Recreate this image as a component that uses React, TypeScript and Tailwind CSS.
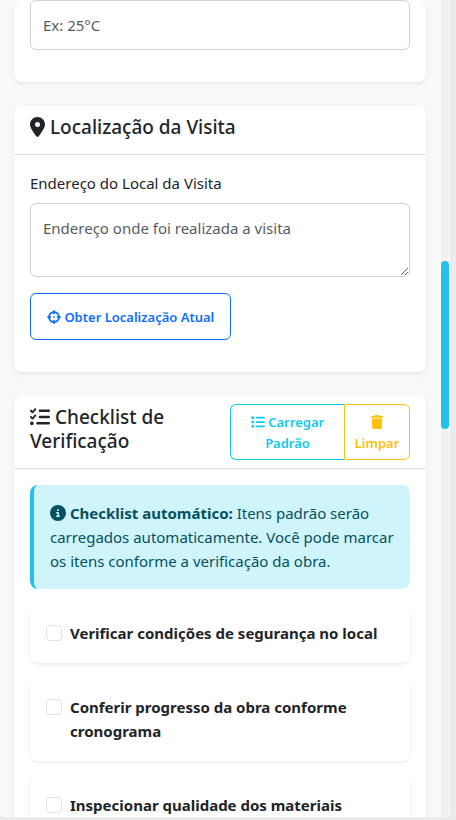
import type { ReactNode } from "react";
import {
  FaCircleInfo,
  FaCrosshairs,
  FaList,
  FaListCheck,
  FaLocationDot,
  FaTrash,
} from "react-icons/fa6";

const checklist = [
  "Verificar condições de segurança no local",
  "Conferir progresso da obra conforme cronograma",
  "Inspecionar qualidade dos materiais",
];

const fieldClass =
  "block w-full rounded-md border border-[#ced4da] bg-white p-3 text-[15px] leading-6 text-[#212529] placeholder:text-[#595c5f]";

function Card({ children }: { children: ReactNode }) {
  return (
    <section className="rounded-lg bg-white shadow-[0_2px_4px_rgba(0,0,0,0.075)]">{children}</section>
  );
}

function CardHeader({ children }: { children: ReactNode }) {
  return (
    <div className="flex items-start justify-between border-b border-[#dfdfe0] px-4 py-2">{children}</div>
  );
}

function CardTitle({ children }: { children: ReactNode }) {
  return <h5 className="pt-px pb-[7px] text-[19px] leading-6 font-medium">{children}</h5>;
}

function ChecklistItem({ id, text }: { id: string; text: string }) {
  return (
    <li className="flex gap-2 rounded-lg bg-white px-4 pt-4 pb-[18px] shadow-[0_2px_4px_rgba(0,0,0,0.075)]">
      <input
        id={id}
        type="checkbox"
        className="mt-1 size-4 shrink-0 appearance-none rounded border border-[#dee2e6] bg-white checked:border-[#0d6efd] checked:bg-[#0d6efd]"
      />
      <label htmlFor={id} className="font-bold">
        {text}
      </label>
    </li>
  );
}

export default function App() {
  return (
    <div className="h-screen overflow-hidden bg-[#e9ebed] pr-1.5 pb-[3px] font-['Segoe_UI','Noto_Sans',sans-serif] text-[15px] leading-6 text-[#212529]">
      <div className="flex h-full overflow-hidden rounded-b bg-[#f8f9fa]">
        <main className="flex min-w-0 flex-1 flex-col gap-6 pr-[15px] pl-3.5">
          <Card>
            <div className="px-4 pb-8">
              <input type="text" aria-label="Temperatura" placeholder="Ex: 25°C" className={fieldClass} />
            </div>
          </Card>

          <Card>
            <CardHeader>
              <CardTitle>
                <FaLocationDot className="inline h-5 w-[15px] align-[-3px]" /> Localização da Visita
              </CardTitle>
            </CardHeader>
            <div className="px-4 pt-4 pb-8">
              <label htmlFor="endereco" className="mb-2 block">
                Endereço do Local da Visita
              </label>
              <textarea
                id="endereco"
                rows={2}
                placeholder="Endereço onde foi realizada a visita"
                className={`${fieldClass} mb-4 resize-y`}
              />
              <button
                type="button"
                className="block rounded-md border border-[#0d6efd] px-4 pt-[13px] pb-[11px] text-[13px] leading-[21px] font-semibold text-[#0d6efd]"
              >
                <FaCrosshairs className="inline size-3.5 align-[-2px]" /> Obter Localização Atual
              </button>
            </div>
          </Card>

          <Card>
            <CardHeader>
              <CardTitle>
                <FaListCheck className="inline size-5 align-[-3px]" /> Checklist de Verificação
              </CardTitle>
              <div className="flex w-[180px] shrink-0 text-[13px] leading-[21px] font-semibold">
                <button
                  type="button"
                  className="flex-1 rounded-l-md border border-r-0 border-[#0dcaf0] px-2.5 pt-[7px] pb-[5px] text-[#0dcaf0]"
                >
                  <FaList className="inline size-3.5 align-[-2px]" /> Carregar Padrão
                </button>
                <button
                  type="button"
                  className="w-[66px] rounded-r-md border border-[#ffc107] px-2 pt-[7px] pb-[5px] text-[#ffc107]"
                >
                  <FaTrash className="inline size-3.5 align-[-2px]" /> Limpar
                </button>
              </div>
            </CardHeader>
            <div className="p-4">
              <div className="mb-4 rounded-lg border-l-4 border-[#22c1e9] bg-[#cff4fc] p-4 text-[#055160]">
                <FaCircleInfo className="inline size-4 align-[-2px]" /> <strong>Checklist automático:</strong>{" "}
                Itens padrão serão carregados automaticamente. Você pode marcar os itens conforme a verificação da
                obra.
              </div>
              <ul className="flex flex-col gap-4">
                {checklist.map((text, index) => (
                  <ChecklistItem key={text} id={`item-${index}`} text={text} />
                ))}
              </ul>
            </div>
          </Card>
        </main>

        <div className="w-[9px] shrink-0 border-r border-[#f8f8f8] bg-[#f1f1f1] pt-[261px]">
          <div className="h-[168px] w-2 rounded bg-[#22c1e9]" />
        </div>
      </div>
    </div>
  );
}
